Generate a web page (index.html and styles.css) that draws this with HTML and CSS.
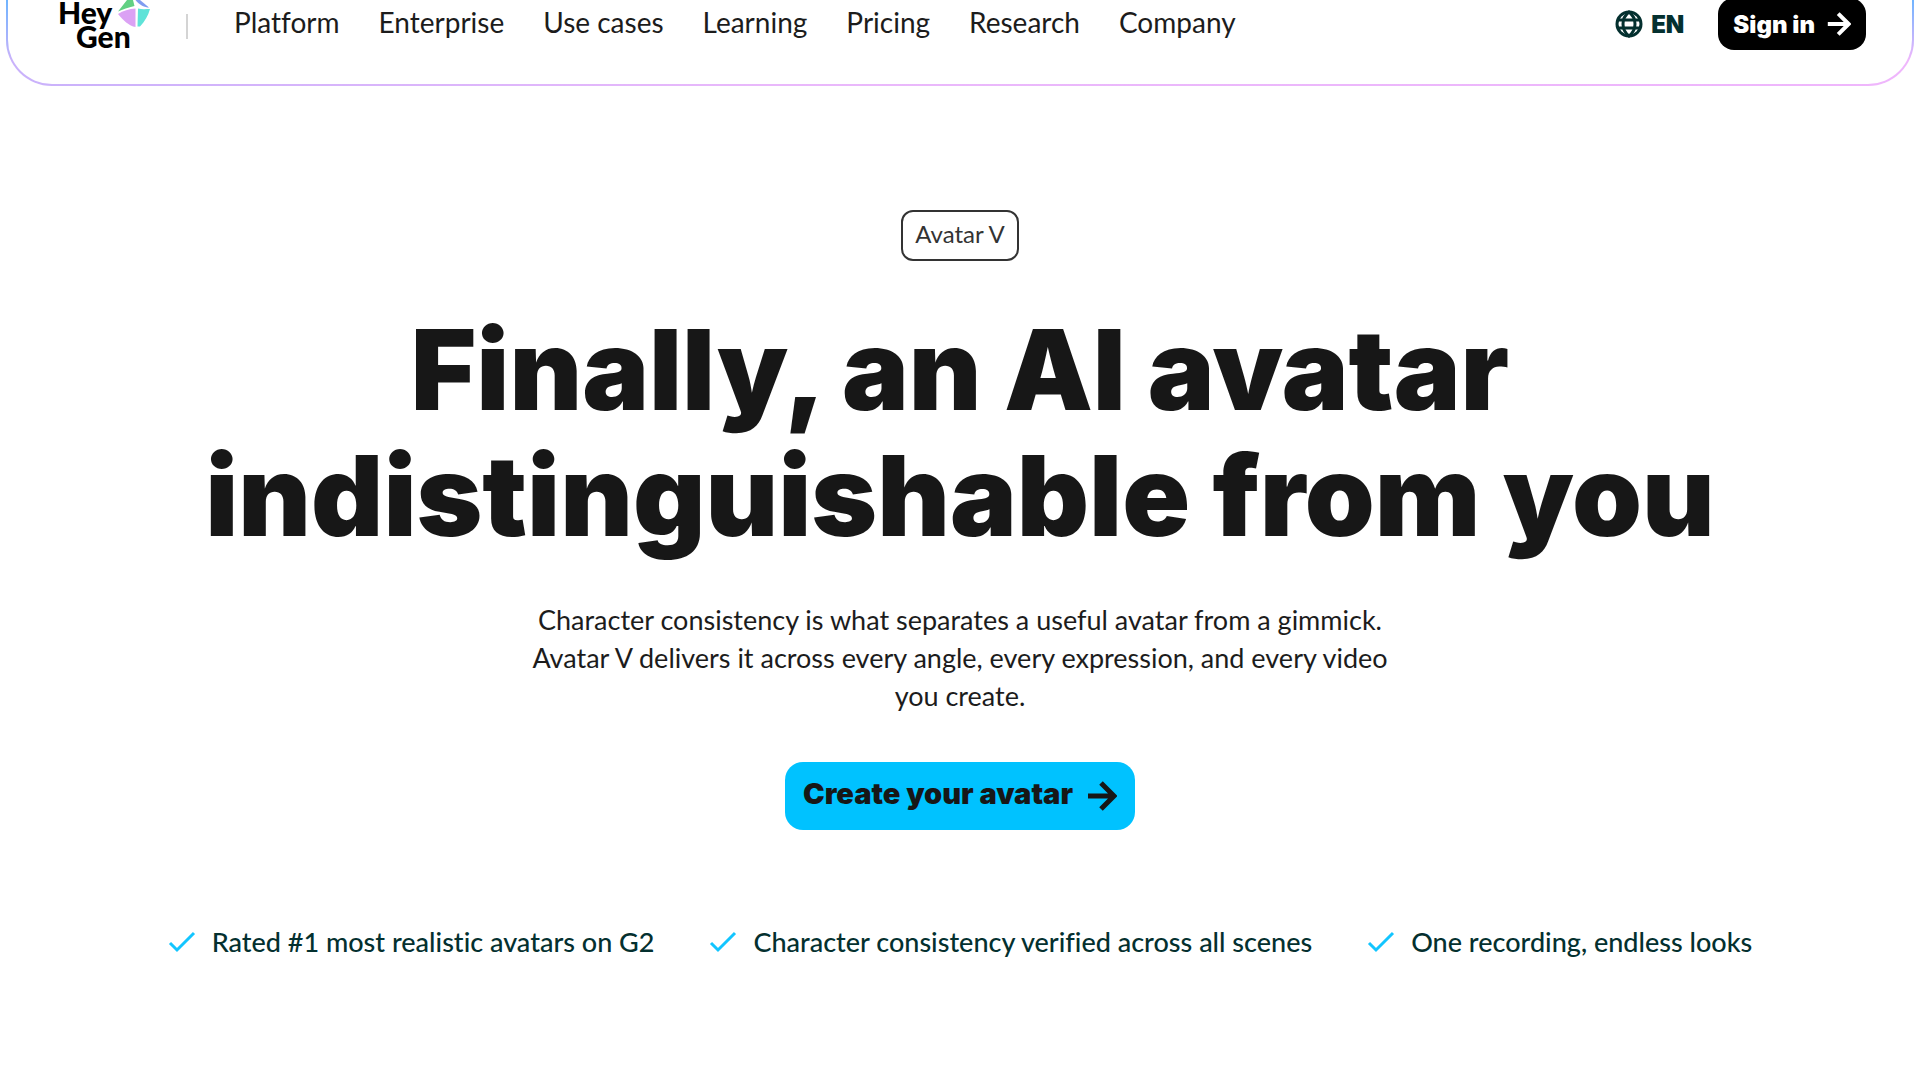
FILE: index.html
```html
<!DOCTYPE html>
<html lang="en">
<head>
    <meta charset="UTF-8">
    <meta name="viewport" content="width=device-width, initial-scale=1.0">
    <title>HeyGen - Avatar V</title>
    <link rel="stylesheet" href="styles.css">
</head>
<body>
    <header class="header">
        <a href="#" class="logo" aria-label="HeyGen">
            <span class="logo-top">Hey</span>
            <span class="logo-bottom">Gen</span>
            <svg class="logo-mark" viewBox="0 0 32 28" aria-hidden="true">
                <path d="M0 11.5 L9 0 H15 L16.500 6 C10 7.500 5 9.500 0 11.500Z" fill="#62d083"/>
                <path d="M17.500 0 H22 L31 7.500 C27 7.500 21 5 17.500 0Z" fill="#7f9cf0"/>
                <path d="M0 14 C5 10.500 11 9 17.500 8.500 V27 C11 26 5 20 0 14Z" fill="#dba2f4"/>
                <path d="M20 8.500 C24 9.500 28 9 32 9 C30 16 27 21 22 26.500 H19.500Z" fill="#5fe3d8"/>
            </svg>
        </a>
        <span class="divider"></span>
        <nav class="nav">
            <a href="#">Platform</a>
            <a href="#">Enterprise</a>
            <a href="#">Use cases</a>
            <a href="#">Learning</a>
            <a href="#">Pricing</a>
            <a href="#">Research</a>
            <a href="#">Company</a>
        </nav>
        <div class="actions">
            <button type="button" class="language">
                <svg class="globe" viewBox="0 0 28 28" aria-hidden="true">
                    <circle cx="14" cy="14" r="12"/>
                    <path d="M14 2 C6 8 6 20 14 26 C22 20 22 8 14 2Z"/>
                    <path d="M3 10 H25 M3 18 H25"/>
                </svg>
                EN
            </button>
            <a href="#" class="sign-in">
                Sign in
                <svg class="arrow" viewBox="0 0 30 30" aria-hidden="true">
                    <path d="M1 15 H26 M14 2 L27 15 L14 28"/>
                </svg>
            </a>
        </div>
    </header>

    <main class="hero">
        <span class="tag">Avatar V</span>
        <h1>Finally, an AI avatar<br>indistinguishable from you</h1>
        <p class="intro">Character consistency is what separates a useful avatar from a gimmick.<br>Avatar V delivers it across every angle, every expression, and every video<br>you create.</p>
        <a href="#" class="cta">
            <span class="cta-text">Create your avatar</span>
            <svg class="arrow" viewBox="0 0 30 30" aria-hidden="true">
                <path d="M1 15 H26 M14 2 L27 15 L14 28"/>
            </svg>
        </a>
        <ul class="benefits">
            <li>
                <svg class="check" viewBox="0 0 28 24" aria-hidden="true"><path d="M2 13 L9 20 L26 3"/></svg>
                Rated #1 most realistic avatars on G2
            </li>
            <li>
                <svg class="check" viewBox="0 0 28 24" aria-hidden="true"><path d="M2 13 L9 20 L26 3"/></svg>
                Character consistency verified across all scenes
            </li>
            <li>
                <svg class="check" viewBox="0 0 28 24" aria-hidden="true"><path d="M2 13 L9 20 L26 3"/></svg>
                One recording, endless looks
            </li>
        </ul>
    </main>
</body>
</html>
```
FILE: styles.css
```css
* {
    box-sizing: border-box;
}

body {
    margin: 0;
    background-color: #fff;
    color: #1c1c1c;
    font-family: Lato, "Liberation Sans", sans-serif;
    font-size: 27px;
    font-variant-ligatures: none;
}

a {
    color: inherit;
    text-decoration: none;
}

svg {
    flex: none;
    fill: none;
}

h1,
.cta,
.actions {
    font-family: Inter, "Liberation Sans", sans-serif;
    font-weight: 900;
}

.header {
    display: flex;
    align-items: flex-start;
    height: 86px;
    margin: 0 6px;
    padding: 0 46px 0 50px;
    border: 2px solid transparent;
    border-top: 0;
    border-radius: 0 0 46px 46px;
    background:
        linear-gradient(#fff, #fff) padding-box,
        linear-gradient(to bottom, #6fb4ff, transparent 60px) border-box,
        linear-gradient(to right, #c9b2fb, #e9b8fb 40%, #efb6fc) border-box;
}

.logo {
    position: relative;
    width: 92px;
    color: #000;
    font-size: 30px;
    font-weight: 900;
    line-height: 24px;
}

.logo-top,
.logo-bottom {
    display: block;
}

.logo-bottom {
    padding-left: 18px;
}

.logo-mark {
    position: absolute;
    top: 0;
    right: 0;
    width: 32px;
    height: 28px;
}

.divider {
    width: 2px;
    height: 25px;
    margin: 14px 46px 0 36px;
    background-color: #d4d4d4;
}

.nav {
    display: flex;
    gap: 39px;
    font-size: 28px;
    line-height: 44px;
}

.actions {
    display: flex;
    gap: 34px;
    margin-left: auto;
    font-size: 24px;
}

.language {
    display: flex;
    align-items: center;
    gap: 8px;
    height: 48px;
    padding: 0;
    border: 0;
    background: none;
    color: #04302f;
    font: inherit;
}

.globe {
    width: 28px;
    height: 28px;
    stroke: currentColor;
    stroke-width: 3;
}

.sign-in {
    display: flex;
    align-items: center;
    gap: 12px;
    height: 52px;
    margin-top: -2px;
    padding: 0 15px;
    border-radius: 16px;
    background-color: #000;
    color: #fff;
}

.arrow {
    width: 24px;
    height: 24px;
    stroke: currentColor;
    stroke-width: 5;
}

.hero {
    display: flex;
    flex-direction: column;
    align-items: center;
    padding-top: 124px;
    text-align: center;
}

.tag {
    padding: 0 12px 4px;
    border: 2px solid #333;
    border-radius: 12px;
    color: #333;
    font-size: 24px;
    line-height: 43px;
}

h1 {
    margin: 45px 0 0;
    color: #171717;
    font-size: 112px;
    line-height: 126px;
}

.intro {
    margin: 43px 0 0;
    line-height: 38px;
}

.cta {
    display: flex;
    align-items: center;
    gap: 14px;
    height: 68px;
    margin-top: 47px;
    padding: 0 18px;
    border-radius: 18px;
    background-color: #00c2ff;
    color: #171717;
    font-size: 29px;
}

.cta-text {
    padding-bottom: 5px;
}

.cta .arrow {
    width: 30px;
    height: 30px;
}

.benefits {
    display: flex;
    gap: 55px;
    margin: 91px 0 0;
    padding: 0;
    color: #04302f;
    font-weight: 500;
    line-height: 42px;
    list-style: none;
}

.benefits li {
    display: flex;
    align-items: center;
    gap: 16px;
}

.check {
    width: 28px;
    height: 24px;
    stroke: #12c5ff;
    stroke-width: 3;
}
```
